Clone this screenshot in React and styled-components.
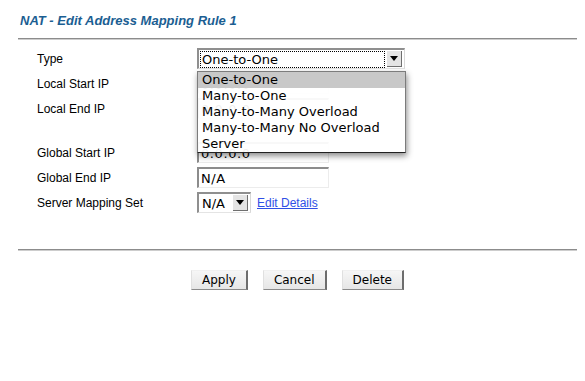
import React from 'react';
import styled, { createGlobalStyle } from 'styled-components';

const GlobalStyle = createGlobalStyle`
  body {
    margin: 0;
    background: #ffffff;
    font-family: "Liberation Sans", Arial, sans-serif;
  }
`;

const Page = styled.div`
  padding: 0 8px 0 18px;
`;

const Title = styled.h1`
  margin: 0 0 0 2px;
  padding-top: 13px;
  font-size: 13px;
  line-height: 16px;
  font-weight: bold;
  font-style: italic;
  color: #1b5e92;
`;

const Rule = styled.div`
  height: 0;
  margin-top: ${(p) => p.$top}px;
  border-top: 1px solid #8c8c8c;
  border-bottom: 1px solid #cdcdcd;
`;

const Form = styled.div`
  margin-top: 6px;
  padding-left: 19px;
`;

const Row = styled.div`
  position: relative;
  display: grid;
  grid-template-columns: 160px auto;
  align-items: center;
  height: 25px;
`;

const Spacer = styled.div`
  height: 19px;
`;

const Label = styled.div`
  font-size: 12px;
  color: #000;
`;

const Control = styled.div`
  position: relative;
  display: flex;
  align-items: center;
`;

const SelectBox = styled.div`
  box-sizing: border-box;
  display: flex;
  align-items: center;
  width: ${(p) => p.$width}px;
  height: 21px;
  border-top: 2px solid #8f8f8f;
  border-left: 2px solid #8f8f8f;
  border-right: 1px solid #d8d8d8;
  border-bottom: 1px solid #e4e4e4;
  background: #fff;
  font-family: "DejaVu Sans", Verdana, sans-serif;
  font-size: 13px;
  color: #000;
`;

const SelectText = styled.span`
  flex: 1;
  height: 17px;
  line-height: 17px;
  margin: 0 2px 0 1px;
  padding-left: 2px;
  outline: ${(p) => (p.$focus ? '1px dotted #000' : 'none')};
  outline-offset: -1px;
`;

const ArrowButton = styled.span`
  display: flex;
  align-items: center;
  justify-content: center;
  width: 14px;
  height: 15px;
  margin-right: 2px;
  background: #e4e4e4;
  border-right: 1px solid #6f6f6f;
  border-bottom: 1px solid #6f6f6f;

  &::after {
    content: '';
    width: 0;
    height: 0;
    border-left: 4px solid transparent;
    border-right: 4px solid transparent;
    border-top: 5px solid #000;
  }
`;

const Menu = styled.ul`
  position: absolute;
  top: 23px;
  left: 0;
  z-index: 2;
  box-sizing: border-box;
  width: 209px;
  margin: 0;
  padding: 0;
  list-style: none;
  background: rgba(255, 255, 255, 0.94);
  border: 1px solid #7c7c7c;
  border-bottom-color: #222;
  box-shadow: 1px 3px 6px rgba(0, 0, 0, 0.45);
  font-family: "DejaVu Sans", Verdana, sans-serif;
  font-size: 13px;
`;

const MenuItem = styled.li`
  height: 16px;
  line-height: 16px;
  padding-left: 4px;
  color: #000;
  background: ${(p) => (p.$active ? '#c8c8c8' : 'transparent')};
`;

const TextInput = styled.input`
  box-sizing: border-box;
  width: 132px;
  height: 21px;
  margin: 0;
  padding: 0 0 0 2px;
  border-top: 2px solid #8c8c8c;
  border-left: 2px solid #8c8c8c;
  border-right: 1px solid #ececec;
  border-bottom: 1px solid #ececec;
  background: #fff;
  font-family: "DejaVu Sans", Verdana, sans-serif;
  font-size: 13px;
  letter-spacing: 0.6px;
  color: #000;
  outline: none;
`;

const Link = styled.a`
  margin-left: 6px;
  font-size: 12px;
  color: #2f4fe6;
  text-decoration: underline;
  cursor: pointer;
`;

const Buttons = styled.div`
  display: flex;
  justify-content: center;
  gap: 15px;
  margin-top: 19px;
`;

const Button = styled.button`
  box-sizing: border-box;
  height: 20px;
  padding: 0 10px;
  background: linear-gradient(#f6f6f6, #e6e6e6);
  border-top: 1px solid #f0f0f0;
  border-left: 1px solid #e0e0e0;
  border-right: 2px solid #6d6d6d;
  border-bottom: 1px solid #8a8a8a;
  font-family: "DejaVu Sans", Verdana, sans-serif;
  font-size: 12px;
  color: #000;
`;

const typeOptions = [
  'One-to-One',
  'Many-to-One',
  'Many-to-Many Overload',
  'Many-to-Many No Overload',
  'Server',
];

export default function App() {
  return (
    <Page>
      <GlobalStyle />
      <Title>NAT - Edit Address Mapping Rule 1</Title>
      <Rule $top={9} />
      <Form>
        <Row>
          <Label>Type</Label>
          <Control>
            <SelectBox $width={208}>
              <SelectText $focus>One-to-One</SelectText>
              <ArrowButton />
            </SelectBox>
            <Menu>
              {typeOptions.map((opt, i) => (
                <MenuItem key={opt} $active={i === 0}>
                  {opt}
                </MenuItem>
              ))}
            </Menu>
          </Control>
        </Row>
        <Row>
          <Label>Local Start IP</Label>
          <Control>
            <TextInput readOnly value="0.0.0.0" />
          </Control>
        </Row>
        <Row>
          <Label>Local End IP</Label>
          <Control>
            <TextInput readOnly value="0.0.0.0" />
          </Control>
        </Row>
        <Spacer />
        <Row>
          <Label>Global Start IP</Label>
          <Control>
            <TextInput readOnly value="0.0.0.0" />
          </Control>
        </Row>
        <Row>
          <Label>Global End IP</Label>
          <Control>
            <TextInput readOnly value="N/A" />
          </Control>
        </Row>
        <Row>
          <Label>Server Mapping Set</Label>
          <Control>
            <SelectBox $width={54}>
              <SelectText>N/A</SelectText>
              <ArrowButton />
            </SelectBox>
            <Link>Edit Details</Link>
          </Control>
        </Row>
      </Form>
      <Rule $top={34} />
      <Buttons>
        <Button>Apply</Button>
        <Button>Cancel</Button>
        <Button>Delete</Button>
      </Buttons>
    </Page>
  );
}
